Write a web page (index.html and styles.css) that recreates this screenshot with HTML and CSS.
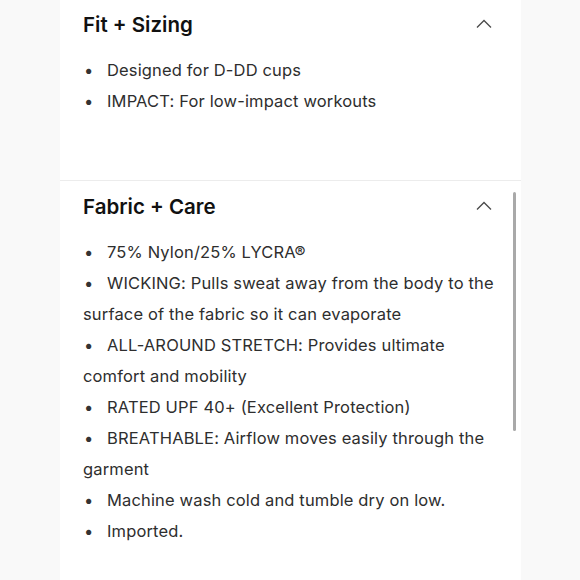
FILE: index.html
```html
<!DOCTYPE html>
<html>
<head>
<meta charset="utf-8">
<link rel="stylesheet" href="styles.css">
</head>
<body>
<div class="panel">
  <section class="section first">
    <div class="head">
      <h2 class="title">Fit + Sizing</h2>
      <svg class="chev" width="16" height="10" viewBox="0 0 16 10"><polyline points="1,8.5 8,1.5 15,8.5" fill="none" stroke="#4a4a4a" stroke-width="1.3"/></svg>
    </div>
    <ul class="list">
      <li class="item"><span class="dot">•</span>Designed for D-DD cups</li>
      <li class="item"><span class="dot">•</span>IMPACT: For low-impact workouts</li>
    </ul>
  </section>
  <section class="section second">
    <div class="head">
      <h2 class="title">Fabric + Care</h2>
      <svg class="chev" width="16" height="10" viewBox="0 0 16 10"><polyline points="1,8.5 8,1.5 15,8.5" fill="none" stroke="#4a4a4a" stroke-width="1.3"/></svg>
    </div>
    <ul class="list">
      <li class="item"><span class="dot">•</span>75% Nylon/25% LYCRA®</li>
      <li class="item"><span class="dot">•</span>WICKING: Pulls sweat away from the body to the surface of the fabric so it can evaporate</li>
      <li class="item"><span class="dot">•</span>ALL-AROUND STRETCH: Provides ultimate comfort and mobility</li>
      <li class="item"><span class="dot">•</span>RATED UPF 40+ (Excellent Protection)</li>
      <li class="item"><span class="dot">•</span>BREATHABLE: Airflow moves easily through the garment</li>
      <li class="item"><span class="dot">•</span>Machine wash cold and tumble dry on low.</li>
      <li class="item"><span class="dot">•</span>Imported.</li>
    </ul>
    <div class="scrollbar"></div>
  </section>
</div>
</body>
</html>
```

FILE: styles.css
```css
html, body {
  margin: 0;
  padding: 0;
}
body {
  background: #f9f9f9;
  font-family: Inter, "Liberation Sans", sans-serif;
  width: 580px;
  height: 580px;
  overflow: hidden;
}
.panel {
  margin-left: 60px;
  width: 461px;
  min-height: 580px;
  background: #fff;
}
.section {
  position: relative;
  padding: 10px 19px 0 23px;
}
.section.first {
  height: 170px;
  border-bottom: 1px solid #ececec;
}
.section.second {
  padding-top: 11px;
}
.head {
  display: flex;
  justify-content: space-between;
  align-items: center;
  height: 29px;
}
.title {
  margin: 0;
  font-size: 20.5px;
  font-weight: 600;
  color: #111;
}
.chev {
  display: block;
  margin-right: 10px;
  margin-top: -2px;
}
.list {
  list-style: none;
  margin: 16px 0 0;
  padding: 0;
}
.item {
  margin: 0;
  font-size: 16.5px;
  letter-spacing: 0.15px;
  line-height: 31px;
  color: #2e2e2e;
}
.dot {
  display: inline-block;
  width: 24px;
  padding-left: 1px;
  box-sizing: border-box;
  color: #333;
}
.scrollbar {
  position: absolute;
  left: 453px;
  top: 11px;
  width: 3px;
  height: 239px;
  background: #a9a9a9;
  border-radius: 2px;
}
```
